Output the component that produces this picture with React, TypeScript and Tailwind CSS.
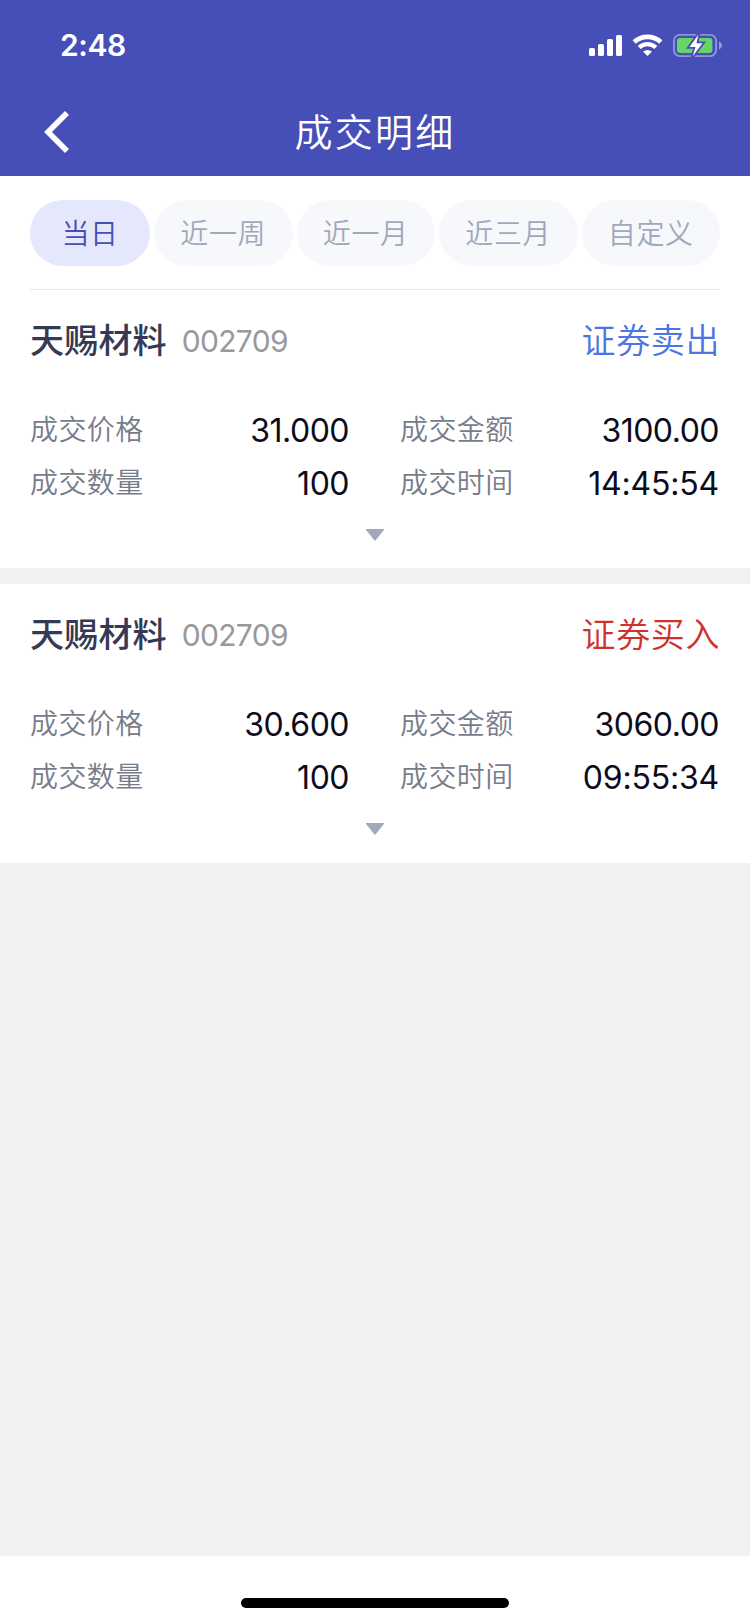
import { useState } from 'react';

type Trade = {
  name: string; code: string; side: 'sell' | 'buy';
  price: string; amount: string; quantity: string; time: string;
};

const RANGES = ['当日', '近一周', '近一月', '近三月', '自定义'];

const TRADES: Trade[] = [
  { name: '天赐材料', code: '002709', side: 'sell', price: '31.000', amount: '3100.00', quantity: '100', time: '14:45:54' },
  { name: '天赐材料', code: '002709', side: 'buy', price: '30.600', amount: '3060.00', quantity: '100', time: '09:55:34' },
];

/* ── Status bar ──────────────────────────────────────── */
function StatusBar() {
  return (
    <div className="h-[88px] pt-1 pl-[60px] pr-[27px] flex items-center justify-between">
      <span className="text-[30px] leading-9 font-semibold tracking-[-0.4px] pb-[2px]">2:48</span>
      <svg width="134" height="26" viewBox="0 0 134 26" fill="none">
        {/* signal */}
        <rect x="0" y="15" width="6" height="8" rx="1.6" fill="#fff" />
        <rect x="9" y="11" width="6" height="12" rx="1.6" fill="#fff" />
        <rect x="18" y="6" width="6" height="17" rx="1.6" fill="#fff" />
        <rect x="27" y="2" width="6" height="21" rx="1.6" fill="#fff" />
        {/* wifi */}
        <path d="M45.2 9.1a19.4 19.4 0 0 1 26.600 0" stroke="#fff" strokeWidth="4.8" />
        <path d="M50.2 14.5a12 12 0 0 1 16.600 0" stroke="#fff" strokeWidth="4.300" />
        <path d="M54 18.600a6.800 6.800 0 0 1 9 0L58.500 23z" fill="#fff" />
        {/* battery */}
        <rect x="84.9" y="1.9" width="42.2" height="21.2" rx="5.8" stroke="#fff" strokeOpacity="0.4" strokeWidth="1.9" />
        <path d="M130 8.6c1.6.7 2.9 2.1 2.9 3.9s-1.3 3.2-2.9 3.9z" fill="#fff" fillOpacity="0.45" />
        <rect x="88" y="5" width="35.4" height="15" rx="3" fill="#66D565" />
        <path
          d="M109.300 1.800 100.500 14h6l-2.800 9.200L113.500 10.300h-6z"
          fill="#fff" stroke="#464EB8" strokeWidth="3.600" strokeMiterlimit="8" paintOrder="stroke"
        />
      </svg>
    </div>
  );
}

/* ── Title bar ───────────────────────────────────────── */
function TitleBar() {
  return (
    <div className="h-[88px] px-11 grid grid-cols-[26px_1fr_26px] items-center">
      <svg width="26" height="44" viewBox="0 0 26 44" fill="none">
        <path d="M23 3 4 22l19 19" stroke="#fff" strokeWidth="5.6" />
      </svg>
      <h1 className="text-center text-[38px] leading-[48px] font-[350] tracking-[2.2px]">成交明细</h1>
    </div>
  );
}

/* ── Label / value pair ──────────────────────────────── */
function Field({ label, value }: { label: string; value: string }) {
  return (
    <div className="flex items-center justify-between h-[53px]">
      <span className="text-[28px] leading-10 font-[350] tracking-[0.4px] text-[#777C8B]">{label}</span>
      <span className={`text-[32px] leading-10 text-[#0C0B1C] pt-[3px] pr-px ${
        value.includes(':') ? 'tracking-[-0.2px]' : 'tracking-[-0.5px]'
      }`}>
        {value}
      </span>
    </div>
  );
}

function TradeCard({ trade }: { trade: Trade }) {
  return (
    <div className="bg-white h-[278.4px] px-[30px] pt-[27px]">
      <div className="flex items-center justify-between h-12">
        <div className="flex items-center gap-[15px]">
          <span className="text-[34px] leading-[48px] font-medium tracking-[0.2px] text-[#353A54]">{trade.name}</span>
          <span className="text-[30px] leading-[48px] tracking-[-0.7px] text-[#999999]">{trade.code}</span>
        </div>
        {trade.side === 'sell'
          ? <span className="text-[34px] leading-[48px] font-[350] tracking-[0.6px] text-[#4C74E4]">证券卖出</span>
          : <span className="text-[34px] leading-[48px] font-[350] tracking-[0.6px] text-[#CD332C]">证券买入</span>}
      </div>
      <div className="mt-[38px] grid grid-cols-2 gap-x-[50px]">
        <Field label="成交价格" value={trade.price} />
        <Field label="成交金额" value={trade.amount} />
        <Field label="成交数量" value={trade.quantity} />
        <Field label="成交时间" value={trade.time} />
      </div>
      <svg className="mx-auto mt-5" width="20" height="12" viewBox="0 0 20 12">
        <path d="M1.500 0h17c.5 0 .7.5.4.900L10.700 11.300c-.4.500-1 .500-1.400 0L1.100.9C.8.500 1 0 1.500 0z" fill="#A1A8BC" />
      </svg>
    </div>
  );
}

export default function App() {
  const [range, setRange] = useState('当日');

  return (
    <div className="w-[750px] h-[1624px] bg-[#F1F1F1] flex flex-col overflow-hidden font-['Inter','Noto_Sans_CJK_SC',sans-serif]">
      <header className="bg-[#464EB8] text-white shrink-0">
        <StatusBar />
        <TitleBar />
      </header>

      {/* Date range tabs */}
      <div className="bg-white px-[30px] pt-6 shrink-0">
        <div className="flex justify-between pb-[23px] border-b border-[#E8E8EA]">
          {RANGES.map(r => (
            <button
              key={r}
              onClick={() => setRange(r)}
              className={`h-[66px] pt-[2px] rounded-full text-[28px] font-[350] tracking-[0.6px] cursor-pointer ${
                r === '当日' ? 'w-[120px]' : 'w-[138.5px]'
              } ${r === range ? 'bg-[#E5E7FD] text-[#464EB8]' : 'bg-[#F7F8FC] text-[#A1A8BC]'}`}
            >
              {r}
            </button>
          ))}
        </div>
      </div>

      <main className="flex-1 flex flex-col gap-4">
        {TRADES.map(t => <TradeCard key={t.side} trade={t} />)}
      </main>

      {/* Home indicator */}
      <footer className="h-[68px] bg-white shrink-0 flex justify-center pt-[42px]">
        <div className="w-[268px] h-[10px] rounded-full bg-black" />
      </footer>
    </div>
  );
}
